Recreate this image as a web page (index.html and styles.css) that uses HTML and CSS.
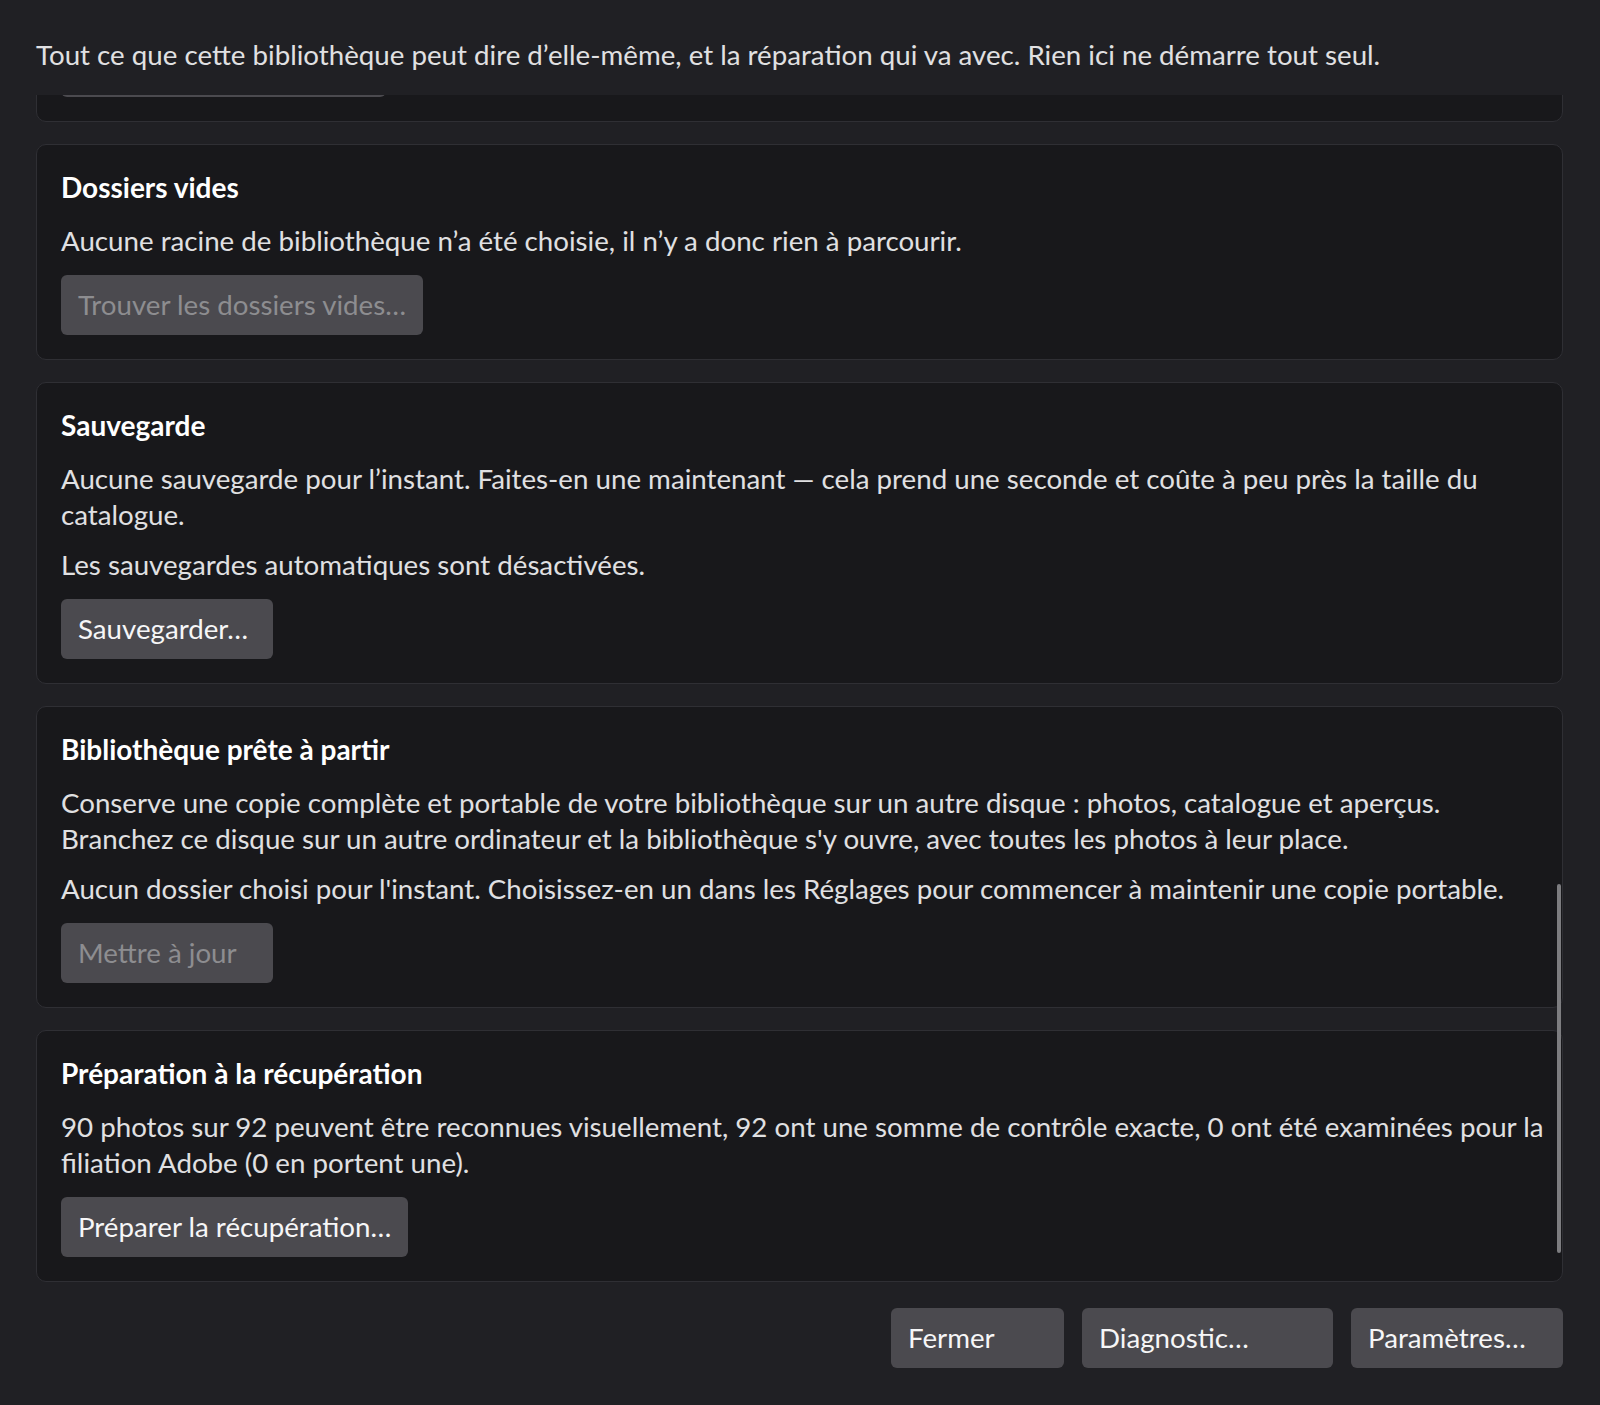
FILE: index.html
```html
<!DOCTYPE html>
<html lang="fr">
<head>
<meta charset="utf-8">
<title>Santé de la bibliothèque</title>
<link rel="stylesheet" href="styles.css">
</head>
<body>
<div class="dialog">
  <p class="intro">Tout ce que cette bibliothèque peut dire d’elle-même, et la réparation qui va avec. Rien ici ne démarre tout seul.</p>
  <div class="scroll">
    <div class="scroll-content">
      <section class="card">
        <h2 class="card-title">Intégrité</h2>
        <p class="card-text">Aucun problème détecté pour l’instant.</p>
        <div class="card-actions"><button class="btn btn-wide" disabled>Vérifier l’intégrité…</button></div>
      </section>
      <section class="card">
        <h2 class="card-title">Dossiers vides</h2>
        <p class="card-text">Aucune racine de bibliothèque n’a été choisie, il n’y a donc rien à parcourir.</p>
        <div class="card-actions"><button class="btn" disabled>Trouver les dossiers vides…</button></div>
      </section>
      <section class="card">
        <h2 class="card-title">Sauvegarde</h2>
        <p class="card-text">Aucune sauvegarde pour l’instant. Faites-en une maintenant — cela prend une seconde et coûte à peu près la taille du catalogue.</p>
        <p class="card-text">Les sauvegardes automatiques sont désactivées.</p>
        <div class="card-actions"><button class="btn">Sauvegarder…</button></div>
      </section>
      <section class="card">
        <h2 class="card-title">Bibliothèque prête à partir</h2>
        <p class="card-text">Conserve une copie complète et portable de votre bibliothèque sur un autre disque : photos, catalogue et aperçus. Branchez ce disque sur un autre ordinateur et la bibliothèque s'y ouvre, avec toutes les photos à leur place.</p>
        <p class="card-text">Aucun dossier choisi pour l'instant. Choisissez-en un dans les Réglages pour commencer à maintenir une copie portable.</p>
        <div class="card-actions"><button class="btn" disabled>Mettre à jour</button></div>
      </section>
      <section class="card">
        <h2 class="card-title">Préparation à la récupération</h2>
        <p class="card-text">90 photos sur 92 peuvent être reconnues visuellement, 92 ont une somme de contrôle exacte, 0 ont été examinées pour la filiation Adobe (0 en portent une).</p>
        <div class="card-actions"><button class="btn">Préparer la récupération…</button></div>
      </section>
    </div>
    <div class="scroll-thumb"></div>
  </div>
  <div class="footer">
    <button class="btn btn-close">Fermer</button>
    <button class="btn btn-diag">Diagnostic…</button>
    <button class="btn btn-settings">Paramètres…</button>
  </div>
</div>
</body>
</html>
```
FILE: styles.css
```css
* { box-sizing: border-box; }
html, body { margin: 0; padding: 0; }
body {
  background: #202024;
  color: #e0e0e2;
  font-family: "Lato", "Noto Sans", sans-serif;
  font-size: 27.7px;
  line-height: 36px;
  height: 1405px;
  overflow: hidden;
}
.dialog {
  height: 100vh;
  display: flex;
  flex-direction: column;
  padding: 37px 37px 37px 36px;
}
.intro {
  margin: 0 0 22px 0;
  flex: none;
}
.scroll {
  position: relative;
  flex: 1;
  min-height: 0;
  overflow: hidden;
}
.scroll-content {
  height: 100%;
  display: flex;
  flex-direction: column;
  justify-content: flex-end;
  gap: 22px;
}
.card {
  flex: none;
  background: #18181b;
  border: 1px solid #2f2f34;
  border-radius: 10px;
  padding: 24px 12px 24px 24px;
  display: flex;
  flex-direction: column;
  gap: 14px;
}
.card-title {
  margin: 0 0 4px 0;
  font-size: 28px;
  line-height: 36px;
  font-weight: 700;
  color: #ffffff;
}
.card-text {
  margin: 0;
}
.card-actions {
  margin-top: 2px;
  display: flex;
}
.btn {
  font-family: inherit;
  font-size: 27.7px;
  line-height: 36px;
  height: 60px;
  min-width: 212px;
  padding: 0 17px;
  border: none;
  border-radius: 6px;
  background: #4b4a4f;
  color: #f6f6f7;
  text-align: left;
  white-space: nowrap;
  cursor: pointer;
}
.btn:disabled {
  color: #8d8d90;
  cursor: default;
}
.btn-wide { width: 325px; }
.scroll-thumb {
  position: absolute;
  right: 2px;
  top: 789px;
  width: 4px;
  height: 369px;
  border-radius: 2px;
  background: #7d7d80;
}
.footer {
  flex: none;
  margin-top: 26px;
  display: flex;
  justify-content: flex-end;
  gap: 18px;
}
.btn-close { width: 173px; min-width: 0; }
.btn-diag { width: 251px; }
.btn-settings { width: 212px; }
```
